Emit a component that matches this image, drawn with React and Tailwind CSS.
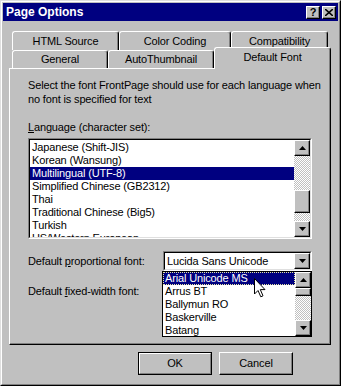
const raised = "border border-t-white border-l-white border-r-black border-b-black shadow-[inset_-1px_-1px_#808080]"

function Arrow({ up }) {
    return (
        <svg width="7" height="4" viewBox="0 0 7 4">
            {up ? <polygon points="3.5,0 7,4 0,4" fill="#000" /> : <polygon points="0,0 7,0 3.5,4" fill="#000" />}
        </svg>
    )
}

function ScrollBtn({ up }) {
    return (
        <div className={`${raised} bg-[#c0c0c0] w-[16px] h-[16px] flex items-center justify-center shrink-0`}>
            <Arrow up={up} />
        </div>
    )
}

function Dither({ h, grow }) {
    return (
        <div
            className={`w-[16px] bg-[repeating-conic-gradient(#c0c0c0_0_25%,#ffffff_0_50%)] bg-[length:2px_2px] ${grow ? "flex-1" : ""}`}
            style={h ? { height: h } : undefined}
        />
    )
}

function Sunken({ className, children }) {
    return (
        <div className={`border border-t-[#808080] border-l-[#808080] border-r-white border-b-white ${className}`}>
            <div className="h-full border border-t-black border-l-black border-r-[#dfdfdf] border-b-[#dfdfdf] bg-white flex">
                {children}
            </div>
        </div>
    )
}

function Tab({ label, w, selected }) {
    return (
        <div
            className={`${selected ? "h-[22px] relative top-[1px] z-10 pb-[3px]" : "h-full"} shrink-0 bg-[#c0c0c0] border-t border-l border-r border-t-white border-l-white border-r-black rounded-t-[3px] shadow-[inset_-1px_0_#808080] flex items-center justify-center`}
            style={{ width: w }}
        >
            {label}
        </div>
    )
}

export default function App() {
    const languages = [
        "Japanese (Shift-JIS)",
        "Korean (Wansung)",
        "Multilingual (UTF-8)",
        "Simplified Chinese (GB2312)",
        "Thai",
        "Traditional Chinese (Big5)",
        "Turkish",
        "US/Western European",
    ]
    const fonts = ["Arial Unicode MS", "Arrus BT", "Ballymun RO", "Baskerville", "Batang"]

    return (
        <div className="w-[341px] h-[386px] bg-[#c0c0c0] border border-t-[#dfdfdf] border-l-[#dfdfdf] border-r-black border-b-black font-['Liberation_Sans',Arial,sans-serif] text-[11px] tracking-[-0.15px] text-black overflow-hidden">
            <div className="h-full border border-t-white border-l-white border-r-[#808080] border-b-[#808080] p-[1px] flex flex-col">
                {/* title bar */}
                <div className="h-[18px] bg-[#000080] flex items-center pl-[3px] pr-[2px]">
                    <span className="text-white font-bold text-[12px] tracking-normal">Page Options</span>
                    <div className="ml-auto flex gap-[2px]">
                        <div className={`${raised} bg-[#c0c0c0] w-[14px] h-[13px] flex items-center justify-center font-bold text-[11px] leading-none`}>?</div>
                        <div className={`${raised} bg-[#c0c0c0] w-[14px] h-[13px] flex items-center justify-center`}>
                            <svg width="8" height="7" viewBox="0 0 8 7">
                                <path d="M0 0 L8 7 M8 0 L0 7" stroke="#000" strokeWidth="1.6" />
                            </svg>
                        </div>
                    </div>
                </div>

                {/* tabs */}
                <div className="mt-[10px] ml-[9px]">
                    <div className="flex h-[19px]">
                        <Tab label="HTML Source" w={107} />
                        <Tab label="Color Coding" w={112} />
                        <Tab label="Compatibility" w={97} />
                    </div>
                    <div className="flex h-[18px] items-end">
                        <Tab label="General" w={96} />
                        <Tab label="AutoThumbnail" w={106} />
                        <Tab label="Default Font" w={117} selected />
                    </div>
                </div>

                {/* panel */}
                <div className="ml-[6px] w-[322px] h-[277px] border border-t-white border-l-white border-r-black border-b-black shadow-[inset_-1px_-1px_#808080] pl-[18px] pt-[9px]">
                    <p className="leading-[14px] whitespace-nowrap">
                        Select the font FrontPage should use for each language when
                        <br />
                        no font is specified for text
                    </p>
                    <p className="mt-[14px] leading-[14px]">
                        <u>L</u>anguage (character set):
                    </p>

                    <Sunken className="mt-[4px] w-[284px] h-[101px]">
                        <div className="flex-1 overflow-hidden pt-[1px]">
                            {languages.map((l, i) => (
                                <div
                                    key={i}
                                    className={`h-[13px] leading-[13px] px-[2px] whitespace-nowrap ${i === 2 ? "bg-[#000080] text-white" : ""}`}
                                >
                                    {l}
                                </div>
                            ))}
                        </div>
                        <div className="flex flex-col">
                            <ScrollBtn up />
                            <Dither h={34} />
                            <div className={`${raised} bg-[#c0c0c0] w-[16px] h-[23px]`} />
                            <Dither grow />
                            <ScrollBtn />
                        </div>
                    </Sunken>

                    <div className="mt-[12px] flex items-center h-[20px]">
                        <span className="w-[135px]">
                            Default <u>p</u>roportional font:
                        </span>
                        <div className="relative">
                            <Sunken className="w-[149px] h-[20px]">
                                <div className="flex-1 px-[2px] leading-[16px]">Lucida Sans Unicode</div>
                                <ScrollBtn />
                            </Sunken>

                            {/* open dropdown */}
                            <div className="absolute left-[-1px] top-[20px] w-[150px] h-[66px] border border-black bg-white flex z-20">
                                <div className="flex-1 overflow-hidden">
                                    {fonts.map((f, i) => (
                                        <div
                                            key={i}
                                            className={`h-[13px] leading-[11px] px-[1px] whitespace-nowrap ${i === 0 ? "bg-[#000080] text-white border border-dotted border-[#e8e8a0]" : "border border-transparent"}`}
                                        >
                                            {f}
                                        </div>
                                    ))}
                                </div>
                                <div className="flex flex-col">
                                    <ScrollBtn up />
                                    <div className={`${raised} bg-[#c0c0c0] w-[16px] h-[8px]`} />
                                    <Dither grow />
                                    <ScrollBtn />
                                </div>
                                <svg className="absolute left-[91px] top-[6px]" width="12" height="20" viewBox="0 0 12 20">
                                    <path d="M0.5 0.5 L0.5 16 L4 12.5 L6.8 18.8 L9 17.8 L6.3 11.6 L11 11.6 Z" fill="#fff" stroke="#000" strokeWidth="1" />
                                </svg>
                            </div>
                        </div>
                    </div>

                    <div className="mt-[10px] flex items-center h-[20px]">
                        <span className="w-[135px]">
                            Default <u>f</u>ixed-width font:
                        </span>
                        <Sunken className="w-[149px] h-[20px]">
                            <div className="flex-1" />
                            <ScrollBtn />
                        </Sunken>
                    </div>
                </div>

                {/* buttons */}
                <div className="mt-[7px] ml-[135px] flex gap-[7px]">
                    <div className="w-[74px] h-[23px] border border-black">
                        <div className="h-full border border-t-white border-l-white border-r-[#808080] border-b-[#808080] flex items-center justify-center">
                            OK
                        </div>
                    </div>
                    <div className={`${raised} w-[74px] h-[23px] flex items-center justify-center`}>Cancel</div>
                </div>
            </div>
        </div>
    )
}
